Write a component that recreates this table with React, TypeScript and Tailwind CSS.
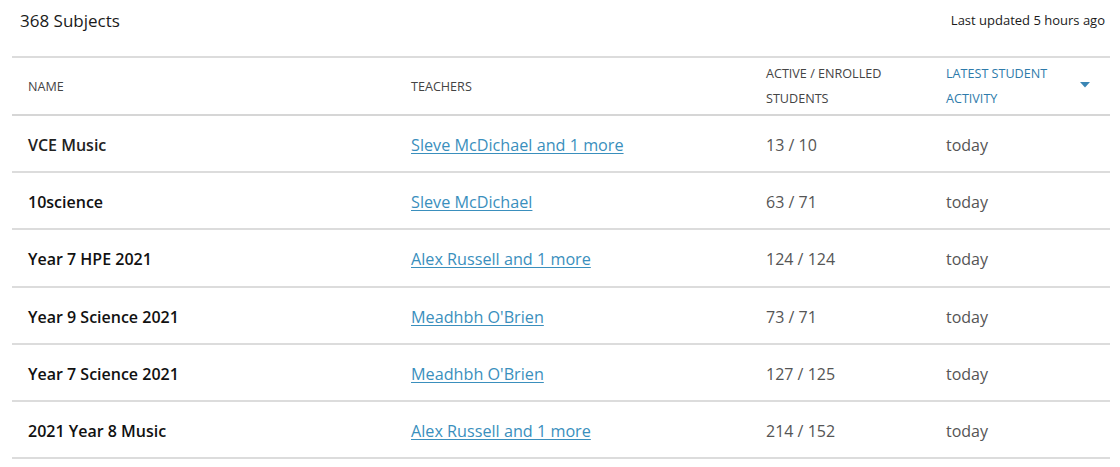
const rows = [
  { name: 'VCE Music', teacher: 'Sleve McDichael and 1 more', count: '13 / 10', weight: 'font-semibold text-[#222]' },
  { name: '10science', teacher: 'Sleve McDichael', count: '63 / 71', weight: 'font-semibold text-[#111]' },
  { name: 'Year 7 HPE 2021', teacher: 'Alex Russell and 1 more', count: '124 / 124', weight: 'font-semibold text-[#111]' },
  { name: 'Year 9 Science 2021', teacher: "Meadhbh O'Brien", count: '73 / 71', weight: 'font-semibold text-[#111]' },
  { name: 'Year 7 Science 2021', teacher: "Meadhbh O'Brien", count: '127 / 125', weight: 'font-semibold text-[#111]' },
  { name: '2021 Year 8 Music', teacher: 'Alex Russell and 1 more', count: '214 / 152', weight: 'font-semibold text-[#111]' },
];

const cols = 'grid grid-cols-[383px_355px_180px_180px]';

const App = () => {
  return (
    <div className="h-[467px] w-[1120px] bg-white font-['Open_Sans',sans-serif] text-[#1a1a1a]">
      <div className="flex h-[40px] items-center justify-between pl-[20px] pr-[15px] pt-[1px]">
        <h1 className="text-[17px]">368 Subjects</h1>
        <span className="text-[13px]">Last updated 5 hours ago</span>
      </div>
      <div className="ml-[12px] mt-[16px] w-[1098px] border-t-2 border-[#dcdcdc]">
        <div className={`${cols} h-[58px] items-center border-b-2 border-[#d6d6d6] text-[12.6px] uppercase leading-[25px]`}>
          <div className="pl-4 text-[#444]">Name</div>
          <div className="pl-4 text-[#444]">Teachers</div>
          <div className="pl-4 text-[#444]">
            Active / Enrolled
            <br />
            Students
          </div>
          <div className="flex items-center justify-between pl-4 pr-[20px] text-[#2e7bab]">
            <span>
              Latest Student
              <br />
              Activity
            </span>
            <svg width="10" height="6" viewBox="0 0 10 6" className="mb-[3px]">
              <path d="M0 0h10L5 5.5z" fill="#3a86b4" />
            </svg>
          </div>
        </div>
        {rows.map(({ name, teacher, count, weight }) => (
          <div
            key={name}
            className={`${cols} h-[57.2px] items-center border-b-2 border-[#dcdcdc] pt-[3px] text-[16px]`}
          >
            <div className={`pl-4 ${weight}`}>{name}</div>
            <div className="pl-4 text-[16.2px]">
              <a href="#" className="text-[#3a8fbd] underline underline-offset-2">
                {teacher}
              </a>
            </div>
            <div className="pl-4 text-[#555]">{count}</div>
            <div className="pl-4 text-[#555]">today</div>
          </div>
        ))}
      </div>
    </div>
  );
};

export default App;
